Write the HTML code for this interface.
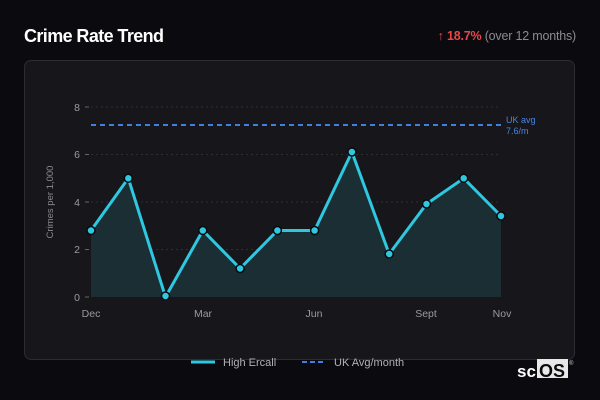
<!DOCTYPE html>
<html><head><style>
body{margin:0;width:600px;height:400px;background:#0b0b0f;font-family:"Liberation Sans","DejaVu Sans",sans-serif;overflow:hidden;position:relative}
.t{position:absolute;left:24px;top:26px;color:#fff;font:bold 18px "Liberation Sans",sans-serif;letter-spacing:-0.6px}
.r{position:absolute;right:24px;top:29px;font:12.5px "Liberation Sans",sans-serif;color:#8a8a90;letter-spacing:-0.2px}
.r b{color:#e8474a}
.card{position:absolute;left:24px;top:60px;width:551px;height:300px;border:1px solid #2c2c32;border-radius:7px;background:#16161b;box-sizing:border-box}
svg{position:absolute;left:0;top:0}
</style></head><body>
<div class="t">Crime Rate Trend</div>
<div class="r"><b>↑ 18.7%</b> (over 12 months)</div>
<div class="card"></div>
<svg width="600" height="400" font-family="Liberation Sans, sans-serif">
<g stroke="#2e2e34" stroke-dasharray="2 3" stroke-width="1">
<line x1="91" y1="107" x2="501" y2="107"/><line x1="91" y1="154.5" x2="501" y2="154.5"/><line x1="91" y1="202" x2="501" y2="202"/><line x1="91" y1="249.5" x2="501" y2="249.5"/>
</g>
<g stroke="#666" stroke-width="1"><line x1="85" y1="107" x2="89" y2="107"/><line x1="85" y1="154.5" x2="89" y2="154.5"/><line x1="85" y1="202" x2="89" y2="202"/><line x1="85" y1="249.5" x2="89" y2="249.5"/><line x1="85" y1="297" x2="89" y2="297"/></g>
<g fill="#9a9aa0" font-size="10.5" text-anchor="end"><text x="80" y="111">8</text><text x="80" y="158">6</text><text x="80" y="206">4</text><text x="80" y="253">2</text><text x="80" y="301">0</text></g>
<text transform="translate(53,202) rotate(-90)" fill="#8a8a90" font-size="9.5" text-anchor="middle">Crimes per 1,000</text>
<polygon fill="#1a2e33" points="91,297 91,230.5 128.3,178.3 165.5,297 202.8,230.5 240.1,268.5 277.4,230.5 314.6,230.5 351.9,152 389.2,254 426.5,204 463.7,178.3 501,216 501,297"/>
<line x1="91" y1="125" x2="501" y2="125" stroke="#3f7fe0" stroke-width="2" stroke-dasharray="5 4"/>
<text x="506" y="123" fill="#4a86e0" font-size="9">UK avg</text><text x="506" y="134" fill="#4a86e0" font-size="9">7.6/m</text>
<polyline fill="none" stroke="#2ec8e0" stroke-width="3" stroke-linejoin="round" points="91,230.5 128.3,178.3 165.5,297 202.8,230.5 240.1,268.5 277.4,230.5 314.6,230.5 351.9,152 389.2,254 426.5,204 463.7,178.3 501,216"/>
<g fill="#2ec8e0" stroke="#0b0b0f" stroke-width="1.5"><circle cx="91" cy="230.5" r="4"/><circle cx="128.3" cy="178.3" r="4"/><circle cx="165.5" cy="296" r="4"/><circle cx="202.8" cy="230.5" r="4"/><circle cx="240.1" cy="268.5" r="4"/><circle cx="277.4" cy="230.5" r="4"/><circle cx="314.6" cy="230.5" r="4"/><circle cx="351.9" cy="152" r="4"/><circle cx="389.2" cy="254" r="4"/><circle cx="426.5" cy="204" r="4"/><circle cx="463.7" cy="178.3" r="4"/><circle cx="501" cy="216" r="4"/></g>
<g fill="#9a9aa0" font-size="10.5" text-anchor="middle"><text x="91" y="317">Dec</text><text x="203" y="317">Mar</text><text x="314" y="317">Jun</text><text x="426" y="317">Sept</text><text x="502" y="317">Nov</text></g>
<line x1="191" y1="362" x2="215" y2="362" stroke="#2ec8e0" stroke-width="3"/>
<text x="223" y="366" fill="#b0b0b5" font-size="11">High Ercall</text>
<line x1="302" y1="362" x2="326" y2="362" stroke="#3f7fe0" stroke-width="2" stroke-dasharray="5 3"/>
<text x="334" y="366" fill="#b0b0b5" font-size="11">UK Avg/month</text>
<text x="517" y="377" fill="#fff" font-size="17" font-weight="bold">sc</text>
<rect x="537" y="359" width="31" height="19" fill="#e8e8e8"/>
<text x="539" y="377" fill="#0b0b0f" font-size="18" font-weight="bold">OS</text>
<text x="569" y="365" fill="#ccc" font-size="6">®</text>
</svg>
</body></html>
